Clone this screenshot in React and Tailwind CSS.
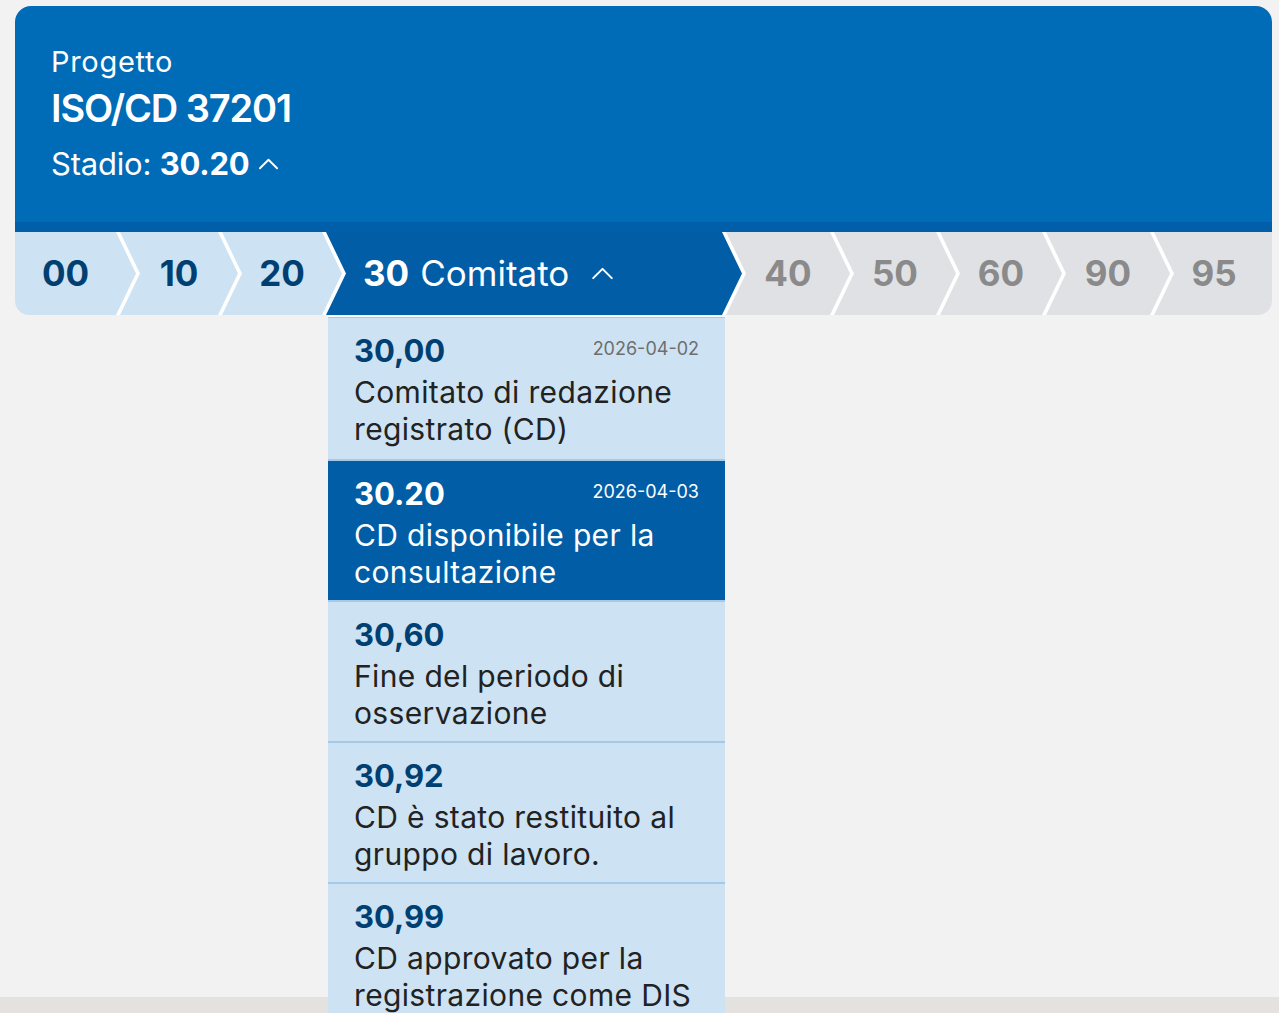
import React from "react";

const Chevron = ({ className }) => (
  <svg viewBox="0 0 24 14" className={className} fill="none" stroke="currentColor" strokeWidth="2.2" strokeLinecap="round" strokeLinejoin="round">
    <polyline points="2,12 12,2 22,12" />
  </svg>
);

const CLIP_FIRST = "polygon(0 0, calc(100% - 20px) 0, 100% 50%, calc(100% - 20px) 100%, 0 100%)";
const CLIP_MID = "polygon(0 0, calc(100% - 20px) 0, 100% 50%, calc(100% - 20px) 100%, 0 100%, 20px 50%)";
const CLIP_LAST = "polygon(0 0, 100% 0, 100% 100%, 0 100%, 20px 50%)";

const items = [
  { code: "30,00", date: "2026-04-02", text: ["Comitato di redazione", "registrato (CD)"] },
  { code: "30.20", date: "2026-04-03", text: ["CD disponibile per la", "consultazione"], active: true },
  { code: "30,60", text: ["Fine del periodo di", "osservazione"] },
  { code: "30,92", text: ["CD è stato restituito al", "gruppo di lavoro."] },
  { code: "30,99", text: ["CD approvato per la", "registrazione come DIS"] },
];

export default function App() {
  return (
    <div className="relative flex h-[1013px] flex-col overflow-hidden bg-[#f2f2f2] font-['Inter','Noto_Sans',sans-serif]">
      <div className="pl-[15px] pr-[7px] pt-[6px]">
        <div className="overflow-hidden rounded-[16px] rounded-b-[14px]">
          <div className="bg-[#006bb7] px-[36px] pb-[38px] pt-[39px] text-white">
            <div className="text-[29px] leading-[34px] tracking-[0.7px]">Progetto</div>
            <div className="mt-[5px] text-[38px] font-semibold leading-[48px] tracking-[-1.1px]">ISO/CD 37201</div>
            <div className="mt-[12px] flex items-center text-[31px] leading-[40px] tracking-[-0.2px]">
              <span>Stadio:&nbsp;</span>
              <span className="font-bold">30.20</span>
              <Chevron className="ml-[8px] h-[12px] w-[21px]" />
            </div>
          </div>
          <div className="h-[10px] bg-[#005fa8]" />
          <div className="flex h-[83px] bg-white text-[35px] font-bold leading-none">
            <div className="flex w-[121px] shrink-0 items-center bg-[#cde2f3] pr-[20px] text-[#003f72]" style={{ clipPath: CLIP_FIRST }}>
              <span className="w-full text-center">00</span>
            </div>
            <div className="-ml-[16px] flex w-[118px] shrink-0 items-center bg-[#cde2f3] px-[20px] text-[#003f72]" style={{ clipPath: CLIP_MID }}>
              <span className="w-full text-center">10</span>
            </div>
            <div className="-ml-[16px] flex w-[120px] shrink-0 items-center bg-[#cde2f3] px-[20px] text-[#003f72]" style={{ clipPath: CLIP_MID }}>
              <span className="w-full text-center">20</span>
            </div>
            <div className="-ml-[16px] flex w-[416px] shrink-0 items-center bg-[#005da6] pl-[37px] text-white" style={{ clipPath: CLIP_MID }}>
              <span className="font-bold">30</span>
              <span className="ml-[11px] font-normal">Comitato</span>
              <Chevron className="ml-[22px] h-[13px] w-[23px]" />
            </div>
            {[
              ["40", "w-[124px]"],
              ["50", "w-[122px]"],
              ["60", "w-[122px]"],
              ["90", "w-[124px]"],
            ].map(([n, w]) => (
              <div key={n} className={`-ml-[16px] flex ${w} shrink-0 items-center bg-[#dfe1e5] px-[20px] text-[#8a8a8a]`} style={{ clipPath: CLIP_MID }}>
                <span className="w-full text-center">{n}</span>
              </div>
            ))}
            <div className="-ml-[16px] flex flex-1 items-center bg-[#dfe1e5] pl-[20px] pr-[18px] text-[#8a8a8a]" style={{ clipPath: CLIP_LAST }}>
              <span className="w-full text-center">95</span>
            </div>
          </div>
        </div>
      </div>
      <div className="flex-1" />
      <div className="h-[16px] bg-[#e3e2df]" />

      <div className="absolute left-[328px] top-[316px] w-[397px] border-t border-white">
        <div className="border-t border-[#a6c9e8]">
          {items.map((it, i) => (
            <div
              key={it.code}
              className={`h-[141px] px-[26px] pt-[15px] ${i > 0 ? "border-t-2" : ""} ${
                it.active ? "border-[#a6c9e8] bg-[#005da6] text-white" : "border-[#a6c9e8] bg-[#cde2f3] text-[#222]"
              }`}
            >
              <div className="flex items-start justify-between">
                <span className={`text-[31px] font-bold leading-[36px] ${it.active ? "text-white" : "text-[#003f72]"}`}>{it.code}</span>
                {it.date && (
                  <span className={`mt-[4px] text-[18px] leading-[24px] ${it.active ? "text-white" : "text-[#6e6e6e]"}`}>{it.date}</span>
                )}
              </div>
              <div className="mt-[5px] text-[30px] leading-[37px] tracking-[0.35px]">
                {it.text.map((t) => (
                  <div key={t} className="whitespace-nowrap">{t}</div>
                ))}
              </div>
            </div>
          ))}
        </div>
      </div>
    </div>
  );
}
